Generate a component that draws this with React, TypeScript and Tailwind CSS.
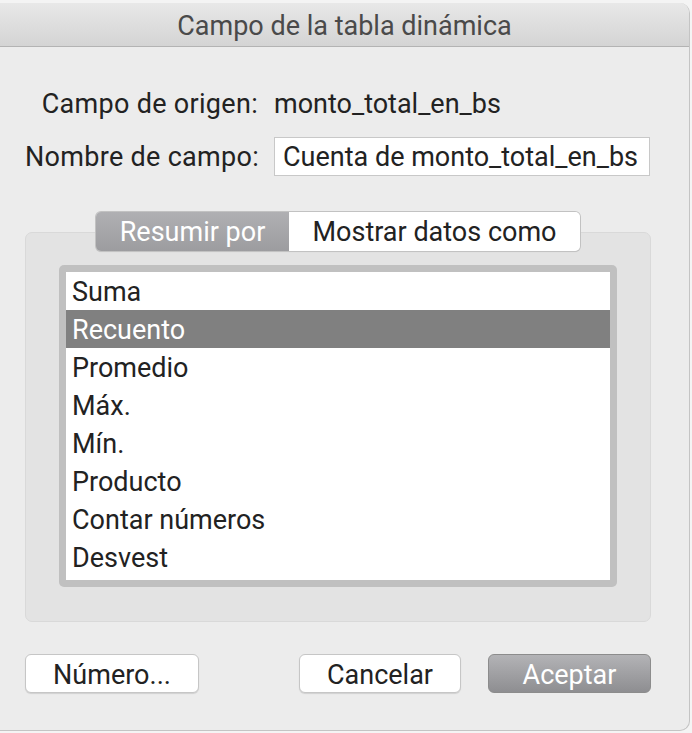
const items = ['Suma', 'Recuento', 'Promedio', 'Máx.', 'Mín.', 'Producto', 'Contar números', 'Desvest'];

export default function App() {
  const selected = 1;
  return (
    <div
      className="w-[692px] h-[733px] bg-[#f4f4f4] overflow-hidden pt-[3px] leading-none"
      style={{ fontFamily: 'Roboto, "Noto Sans", sans-serif' }}
    >
      <div className="w-[690px] h-[728px] bg-[#ececec] rounded-tr-[10px] rounded-br-[10px] border-r border-b border-[#c4c4c4] flex flex-col overflow-hidden">
        {/* title bar */}
        <div className="h-[44px] shrink-0 flex items-center justify-center pt-[4px] bg-gradient-to-b from-[#e8e8e8] to-[#d4d4d4] border-b border-[#b3b3b3]">
          <span className="text-[27px] text-[#4a4a4a]">Campo de la tabla dinámica</span>
        </div>

        <div className="flex flex-col px-[25px]">
          <div className="flex items-center h-[34px] mt-[39px] pt-[2px] text-[27px] text-[#222]">
            <span className="w-[249px] text-right pr-[16px] tracking-[0.3px] whitespace-nowrap">Campo de origen:</span>
            <span>monto_total_en_bs</span>
          </div>
          <div className="flex items-center mt-[17px] text-[27px] text-[#222]">
            <span className="w-[249px] text-right pr-[16px] pt-[2px] tracking-[0.3px] whitespace-nowrap">Nombre de campo:</span>
            <div className="w-[376px] h-[39px] bg-white border border-[#c8c8c8] flex items-center pl-[8px] pt-[2px] whitespace-nowrap">
              Cuenta de monto_total_en_bs
            </div>
          </div>

          {/* group box */}
          <div className="relative mt-[56px] w-[626px] h-[390px] bg-[#e3e3e3] border border-[#d9d9d9] rounded-[7px] flex flex-col items-center">
            <div className="absolute -top-[21px] left-[70px] flex h-[39px] rounded-[5px] shadow-[0_0_0_1px_#c2c2c2,0_1px_1px_rgba(0,0,0,0.15)] overflow-hidden text-[27px]">
              <div className="w-[193px] flex items-center justify-center pt-[2px] bg-gradient-to-b from-[#b0b0b3] to-[#9c9c9f] text-white">
                Resumir por
              </div>
              <div className="w-[291px] flex items-center justify-center pt-[2px] bg-white text-[#222]">
                Mostrar datos como
              </div>
            </div>

            <div className="mt-[32px] w-[558px] h-[322px] bg-[#c0c0c0] rounded-[5px] p-[7px]">
              <div className="w-full h-full bg-white flex flex-col text-[27px] text-[#222]">
                {items.map((it, i) => (
                  <div
                    key={it}
                    className={
                      'h-[38px] shrink-0 flex items-center pl-[6px] pt-[3px] ' +
                      (i === selected ? 'bg-[#808080] text-white' : '')
                    }
                  >
                    {it}
                  </div>
                ))}
              </div>
            </div>
          </div>

          {/* buttons */}
          <div className="flex items-center mt-[32px] text-[27px]">
            <button className="w-[174px] h-[39px] pt-[3px] bg-white rounded-[6px] border border-[#c6c6c6] shadow-[0_1px_1px_rgba(0,0,0,0.12)] text-[#222]">
              Número...
            </button>
            <button className="ml-[100px] w-[162px] h-[39px] pt-[3px] bg-white rounded-[6px] border border-[#c6c6c6] shadow-[0_1px_1px_rgba(0,0,0,0.12)] text-[#222]">
              Cancelar
            </button>
            <button className="ml-[27px] w-[163px] h-[39px] pt-[3px] rounded-[6px] border border-[#8c8c8c] bg-gradient-to-b from-[#b3b3b6] to-[#8e8e91] text-white">
              Aceptar
            </button>
          </div>
        </div>
      </div>
    </div>
  );
}
